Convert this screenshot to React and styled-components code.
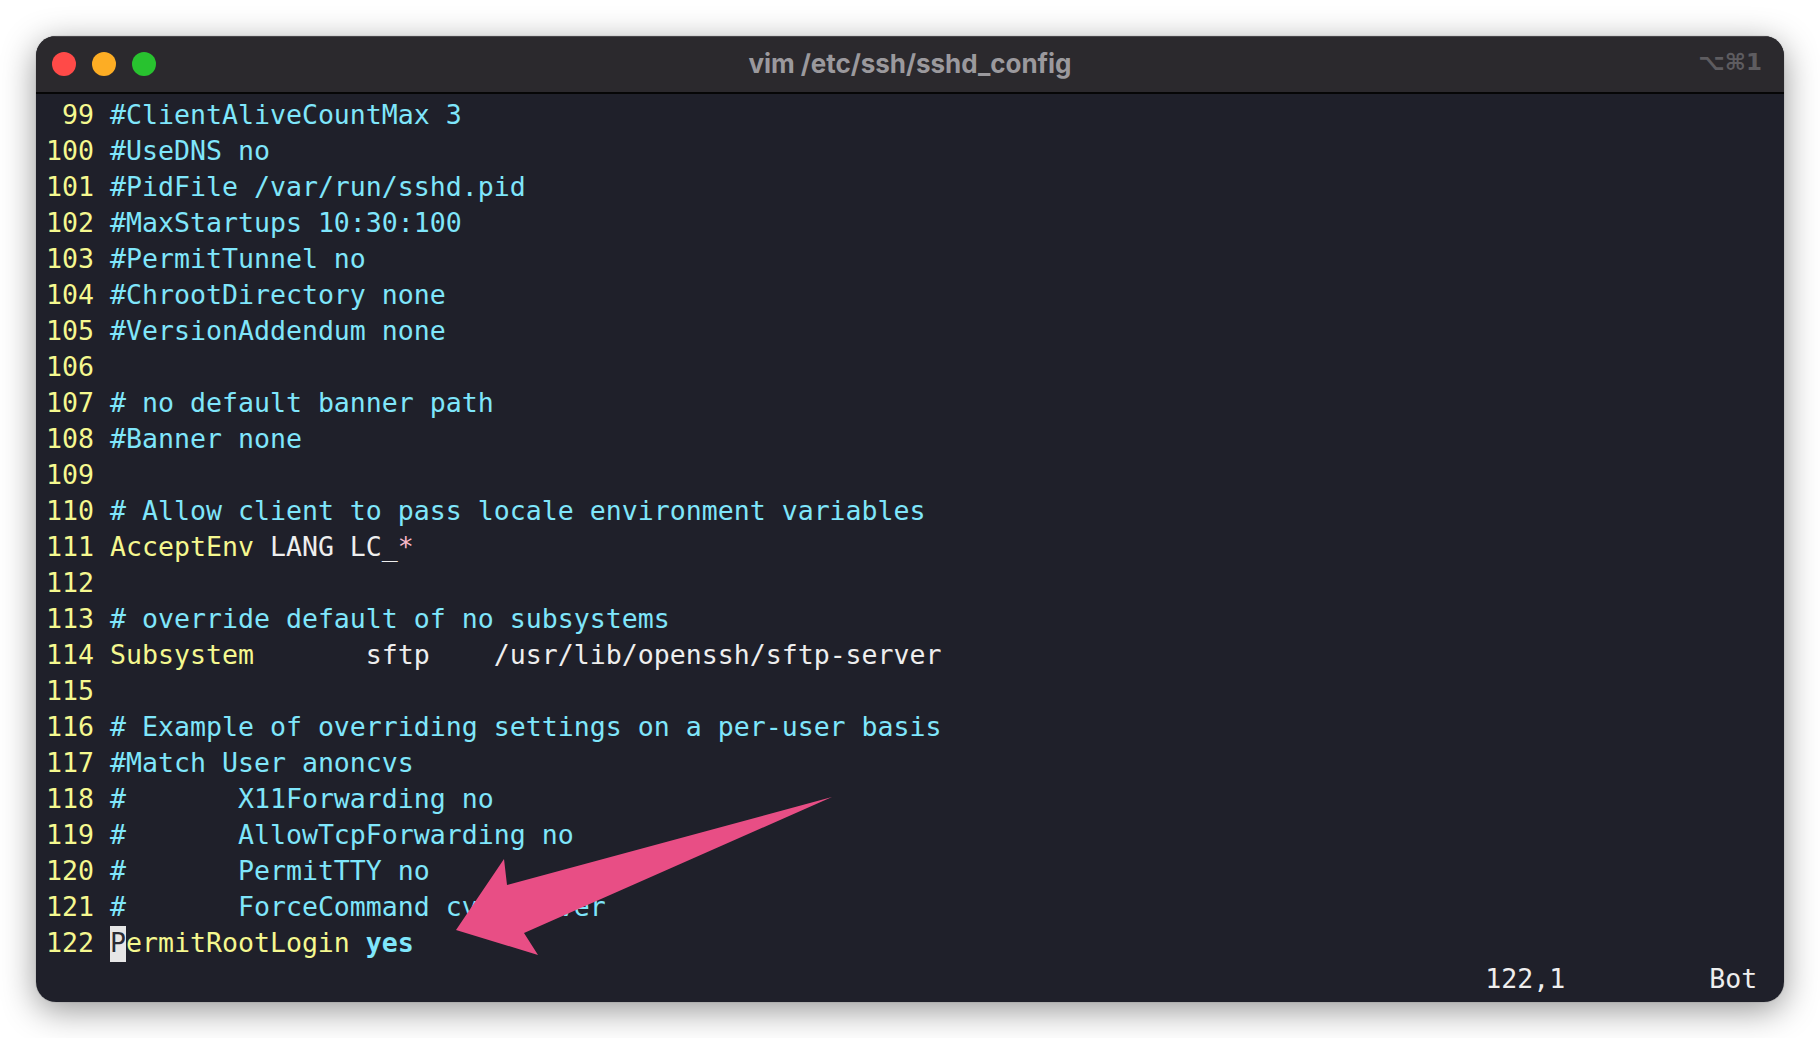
import React from "react";
import styled, { createGlobalStyle } from "styled-components";

const Global = createGlobalStyle`
  html, body { margin: 0; padding: 0; background: #fff; }
  body { width: 1820px; height: 1038px; overflow: hidden; }
`;

const Page = styled.div`
  width: 1820px;
  height: 1038px;
  padding: 36px;
  box-sizing: border-box;
  background: #fff;
`;

const Window = styled.div`
  position: relative;
  height: 966px;
  border-radius: 20px;
  overflow: hidden;
  background: #1f202a;
  display: flex;
  flex-direction: column;
`;

const Shadowed = styled.div`
  border-radius: 20px;
  box-shadow: 0 0 1px rgba(0, 0, 0, 0.5), 0 8px 34px rgba(0, 0, 0, 0.42);
`;

const TitleBar = styled.header`
  flex: 0 0 58px;
  height: 58px;
  box-sizing: border-box;
  background: #2b292d;
  border-top: 1px solid #48464a;
  border-bottom: 2px solid #060606;
  display: grid;
  grid-template-columns: 1fr auto 1fr;
  align-items: center;
  padding: 0 16px 2px;
`;

const Lights = styled.div`
  display: flex;
  gap: 16px;
`;

const Light = styled.span`
  width: 24px;
  height: 24px;
  border-radius: 50%;
  background: ${(p) => p.$color};
`;

const Title = styled.div`
  font: 700 26px Inter, "Liberation Sans", Arial, sans-serif;
  letter-spacing: -0.05px;
  margin-bottom: 1px;
  color: #9b999d;
`;

const Shortcut = styled.div`
  justify-self: end;
  margin: 0 6px 3px 0;
  font: bold 23px "DejaVu Sans", "Liberation Sans", sans-serif;
  color: #5e5c60;
`;

const Screen = styled.main`
  flex: 1;
  padding: 4px 0 0 10px;
  font-family: "DejaVu Sans Mono", "Liberation Mono", monospace;
  font-size: 26.57px;
  white-space: pre;
`;

const Row = styled.div`
  height: 36px;
  line-height: 34px;
`;

const LineNo = styled.span`
  color: #f5f88f;
`;

const Token = styled.span`
  color: ${(p) =>
    ({
      comment: "#7fe6fb",
      key: "#f5f88f",
      plain: "#eeeeee",
      star: "#f9b8c8",
      value: "#7fe6fb",
    })[p.$kind]};
  font-weight: ${(p) => (p.$kind === "value" ? "bold" : "normal")};
`;

const Cursor = styled.span`
  display: inline-block;
  width: 16px;
  height: 36px;
  vertical-align: top;
  background: #e6e6e6;
  color: #2a2b33;
`;

const Status = styled(Row)`
  color: #eeeeee;
`;

const Arrow = styled.svg`
  position: absolute;
  left: 0;
  top: 0;
  width: 1748px;
  height: 966px;
  pointer-events: none;
`;

const rows = [
  [99, [["comment", "#ClientAliveCountMax 3"]]],
  [100, [["comment", "#UseDNS no"]]],
  [101, [["comment", "#PidFile /var/run/sshd.pid"]]],
  [102, [["comment", "#MaxStartups 10:30:100"]]],
  [103, [["comment", "#PermitTunnel no"]]],
  [104, [["comment", "#ChrootDirectory none"]]],
  [105, [["comment", "#VersionAddendum none"]]],
  [106, []],
  [107, [["comment", "# no default banner path"]]],
  [108, [["comment", "#Banner none"]]],
  [109, []],
  [110, [["comment", "# Allow client to pass locale environment variables"]]],
  [111, [["key", "AcceptEnv"], ["plain", " LANG LC_"], ["star", "*"]]],
  [112, []],
  [113, [["comment", "# override default of no subsystems"]]],
  [114, [["key", "Subsystem"], ["plain", "       sftp    /usr/lib/openssh/sftp-server"]]],
  [115, []],
  [116, [["comment", "# Example of overriding settings on a per-user basis"]]],
  [117, [["comment", "#Match User anoncvs"]]],
  [118, [["comment", "#       X11Forwarding no"]]],
  [119, [["comment", "#       AllowTcpForwarding no"]]],
  [120, [["comment", "#       PermitTTY no"]]],
  [121, [["comment", "#       ForceCommand cvs server"]]],
];

export default function App() {
  return (
    <Page>
      <Global />
      <Shadowed>
        <Window>
          <TitleBar>
            <Lights>
              <Light $color="#ff4a48" />
              <Light $color="#fdad24" />
              <Light $color="#28c22f" />
            </Lights>
            <Title>vim /etc/ssh/sshd_config</Title>
            <Shortcut>⌥⌘1</Shortcut>
          </TitleBar>
          <Screen>
            {rows.map(([n, tokens]) => (
              <Row key={n}>
                <LineNo>{String(n).padStart(3, " ")} </LineNo>
                {tokens.map(([kind, text], i) => (
                  <Token key={i} $kind={kind}>
                    {text}
                  </Token>
                ))}
              </Row>
            ))}
            <Row>
              <LineNo>122 </LineNo>
              <Cursor>P</Cursor>
              <Token $kind="key">ermitRootLogin</Token>
              <Token $kind="plain"> </Token>
              <Token $kind="value">yes</Token>
            </Row>
            <Status>{" ".repeat(90)}122,1{" ".repeat(9)}Bot</Status>
          </Screen>
          <Arrow viewBox="36 36 1748 966">
            <polygon
              points="832,797 507,885 504,859 456,930 538,955 524,933"
              fill="#e84e85"
            />
          </Arrow>
        </Window>
      </Shadowed>
    </Page>
  );
}
